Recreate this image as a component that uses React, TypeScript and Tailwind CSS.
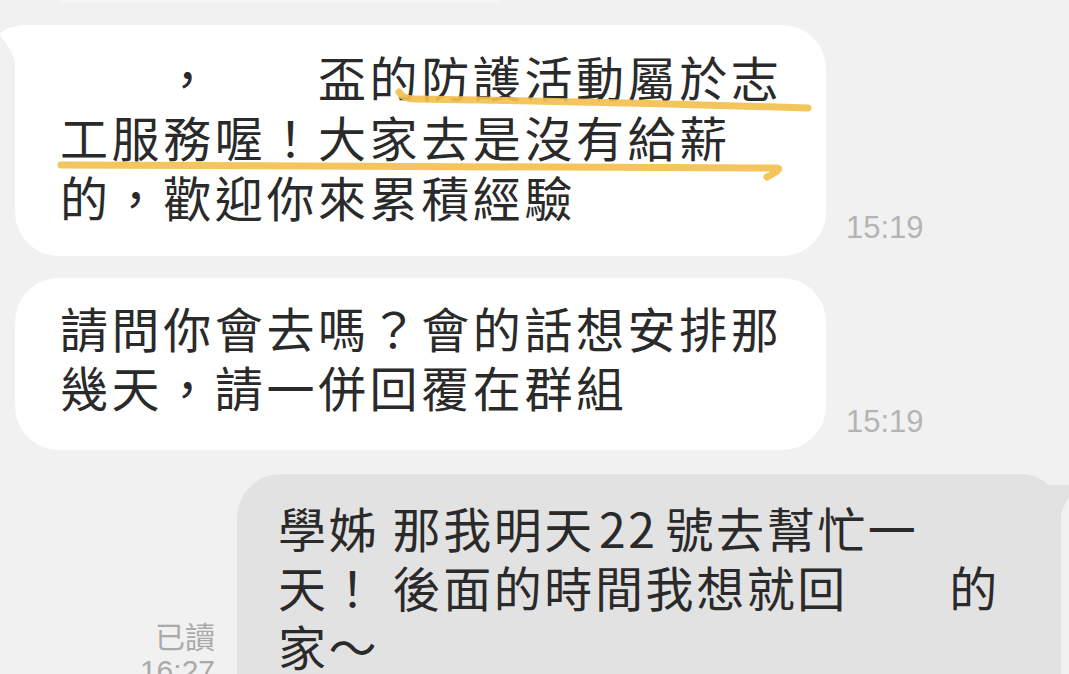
import React from "react";

function Stamp({ t, mb }: { t: string; mb: string }) {
  return (
    <div
      className={`font-['Liberation_Sans','Arial',sans-serif] text-[31px] leading-[31px] text-[#b4b4b4] ${mb}`}
    >
      {t}
    </div>
  );
}

export default function App() {
  return (
    <div className="relative w-[1069px] h-[674px] overflow-hidden bg-[#f1f1f1] font-['Noto_Sans_CJK_TC','Noto_Sans_CJK_SC',sans-serif] text-[#2a2a2a]">
      <div className="flex flex-col">
        <div className="ml-[60px] w-[440px] h-[3px] rounded-b-[4px] bg-[#f6f6f6]" />

        {/* Bubble 1 */}
        <div className="mt-[22px] flex items-end gap-[20px] pl-[15px]">
          <div className="relative w-[811px] rounded-[44px] rounded-tl-[20px] bg-white pl-[45px] pt-[21px] pb-[30px] text-[48px] leading-[60px] tracking-[3.6px] whitespace-nowrap">
            <svg
              className="absolute left-[-15px] top-0"
              width="40"
              height="40"
              viewBox="0 0 40 40"
            >
              <path
                d="M0 9 Q2 5 12 2 L22 0 L40 0 L40 40 L15 40 L15 36 Q10 22 2 13 Q-0.5 11 0 9 Z"
                fill="#ffffff"
              />
            </svg>
            <div>　　，　　盃的防護活動屬於志</div>
            <div>工服務喔！大家去是沒有給薪</div>
            <div>的，歡迎你來累積經驗</div>
            <svg
              className="pointer-events-none absolute left-0 top-0"
              width="811"
              height="231"
              viewBox="0 0 811 231"
            >
              <path
                d="M384 67 Q388 74 400 74 Q600 77 793 83"
                fill="none"
                stroke="#f2c04e"
                strokeWidth="7"
                strokeLinecap="round"
                strokeOpacity="0.92"
              />
              <path
                d="M46 140 Q400 142 762 143 Q768 144 752 152"
                fill="none"
                stroke="#f2c04e"
                strokeWidth="7"
                strokeLinecap="round"
                strokeLinejoin="round"
                strokeOpacity="0.92"
              />
            </svg>
          </div>
          <Stamp t="15:19" mb="mb-[13px]" />
        </div>

        {/* Bubble 2 */}
        <div className="mt-[22px] flex items-end gap-[20px] pl-[15px]">
          <div className="w-[811px] rounded-[44px] bg-white pl-[45px] pt-[20px] pb-[34px] text-[48px] leading-[59px] tracking-[3.6px] whitespace-nowrap">
            <div>請問你會去嗎？會的話想安排那</div>
            <div>幾天，請一併回覆在群組</div>
          </div>
          <Stamp t="15:19" mb="mb-[13px]" />
        </div>

        {/* Bubble 3 (mine) */}
        <div className="mt-[24px] flex items-start gap-[22px]">
          <div className="mt-[143px] w-[215px] shrink-0 text-right text-[#aaaaaa]">
            <div className="text-[30px] leading-[36px]">已讀</div>
            <div className="font-['Liberation_Sans','Arial',sans-serif] text-[30px] leading-[36px]">
              16:27
            </div>
          </div>
          <div className="relative w-[824px] shrink-0 rounded-tl-[44px] rounded-tr-[40px] bg-[#e2e2e2] pl-[41px] pt-[24px] pb-[40px] text-[48px] leading-[59px] tracking-[2.6px] whitespace-nowrap">
            <svg
              className="absolute left-[793px] top-[11px]"
              width="45"
              height="30"
              viewBox="0 0 45 30"
            >
              <path d="M0 0 L45 0 L45 5 Q35 15 31 30 L0 30 Z" fill="#e2e2e2" />
            </svg>
            <div>
              學姊 那我明天<span className="ml-[4px] mr-[8px]">22</span>號去幫忙一
            </div>
            <div>天！ 後面的時間我想就回　　的</div>
            <div>家～</div>
          </div>
        </div>
      </div>
    </div>
  );
}
